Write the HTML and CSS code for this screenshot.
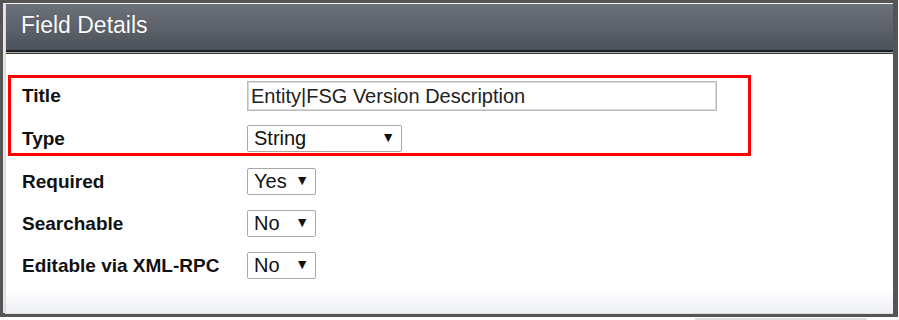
FILE: index.html
```html
<!DOCTYPE html>
<html>
<head>
<meta charset="utf-8">
<link rel="stylesheet" href="styles.css">
</head>
<body>
<div class="frame">
  <div class="panel">
    <div class="header"><span class="header-title">Field Details</span></div>
    <div class="header-rule"></div>
    <div class="content">
      <div class="highlight">
        <div class="row row-title">
          <div class="label">Title</div>
          <div class="textbox">Entity|FSG Version Description</div>
        </div>
        <div class="row">
          <div class="label">Type</div>
          <div class="select select-type"><span>String</span><span class="arrow">▼</span></div>
        </div>
      </div>
      <div class="rows">
        <div class="row">
          <div class="label">Required</div>
          <div class="select select-small"><span>Yes</span><span class="arrow">▼</span></div>
        </div>
        <div class="row">
          <div class="label">Searchable</div>
          <div class="select select-small"><span>No</span><span class="arrow">▼</span></div>
        </div>
        <div class="row">
          <div class="label">Editable via XML-RPC</div>
          <div class="select select-small"><span>No</span><span class="arrow">▼</span></div>
        </div>
      </div>
    </div>
  </div>
  <div class="shadow"></div>
</div>
</body>
</html>
```
FILE: styles.css
```css
html, body {
  margin: 0;
  padding: 0;
  background: #ffffff;
}
body {
  font-family: "Liberation Sans", Arial, sans-serif;
  width: 899px;
  height: 320px;
  overflow: hidden;
}
.frame {
  position: relative;
  width: 890px;
  height: 310px;
  border-style: solid;
  border-color: #555555;
  border-width: 3px 5px 4px 3px;
  background: #e4e4e4;
}
.panel {
  margin-left: 2px;
  height: 309px;
  border-left: 1px solid #dcdcdc;
  border-top: 1px solid #f4f4f4;
  border-bottom: 1px solid #dedede;
  background: linear-gradient(to bottom, #ffffff 0, #ffffff 285px, #eef0f4 309px);
  display: flex;
  flex-direction: column;
}
.header {
  height: 46px;
  background: linear-gradient(to bottom, #6c7078 0%, #5e636b 50%, #4c5259 100%);
  display: flex;
  align-items: center;
  padding-left: 15px;
}
.header-title {
  color: #ffffff;
  font-size: 23px;
  margin-top: -4px;
  text-shadow: 0 0 1px rgba(0,0,0,0.4);
}
.header-rule {
  height: 2px;
  background: #1e1f21;
  border-bottom: 1px solid #a8a8a8;
  box-shadow: 0 1px 0 #3a3a3a;
}
.content {
  padding-top: 22px;
}
.highlight {
  width: 716px;
  margin-left: 2px;
  border: 3px solid #ff0000;
  padding: 3px 10px 1px 11px;
  display: flex;
  flex-direction: column;
  gap: 14px;
}
.rows {
  margin-top: 12px;
  padding-left: 16px;
  display: flex;
  flex-direction: column;
  gap: 15px;
}
.row {
  display: flex;
  align-items: center;
  height: 27px;
}
.row-title {
  height: 30px;
}
.label {
  width: 225px;
  flex: none;
  font-size: 19px;
  font-weight: bold;
  color: #111111;
  white-space: nowrap;
}
.textbox {
  box-sizing: border-box;
  width: 470px;
  height: 30px;
  border: 1px solid #bcbcbc;
  box-shadow: inset 0 0 0 1px #d8d8d8;
  padding-left: 3px;
  font-size: 20px;
  line-height: 28px;
  color: #222222;
  background: #ffffff;
}
.select {
  box-sizing: border-box;
  height: 27px;
  border: 1px solid #a9a9a9;
  border-radius: 2px;
  background: #ffffff;
  display: flex;
  align-items: center;
  justify-content: space-between;
  padding: 0 6px 0 6px;
  font-size: 20px;
  color: #111111;
}
.select-type {
  width: 155px;
}
.select-small {
  width: 69px;
  padding-left: 6px;
}
.arrow {
  font-size: 14px;
  color: #111111;
  margin-top: -3px;
}
.shadow {
  position: absolute;
  left: 692px;
  bottom: -8px;
  width: 172px;
  height: 3px;
  background: #dcdcdc;
}
```
